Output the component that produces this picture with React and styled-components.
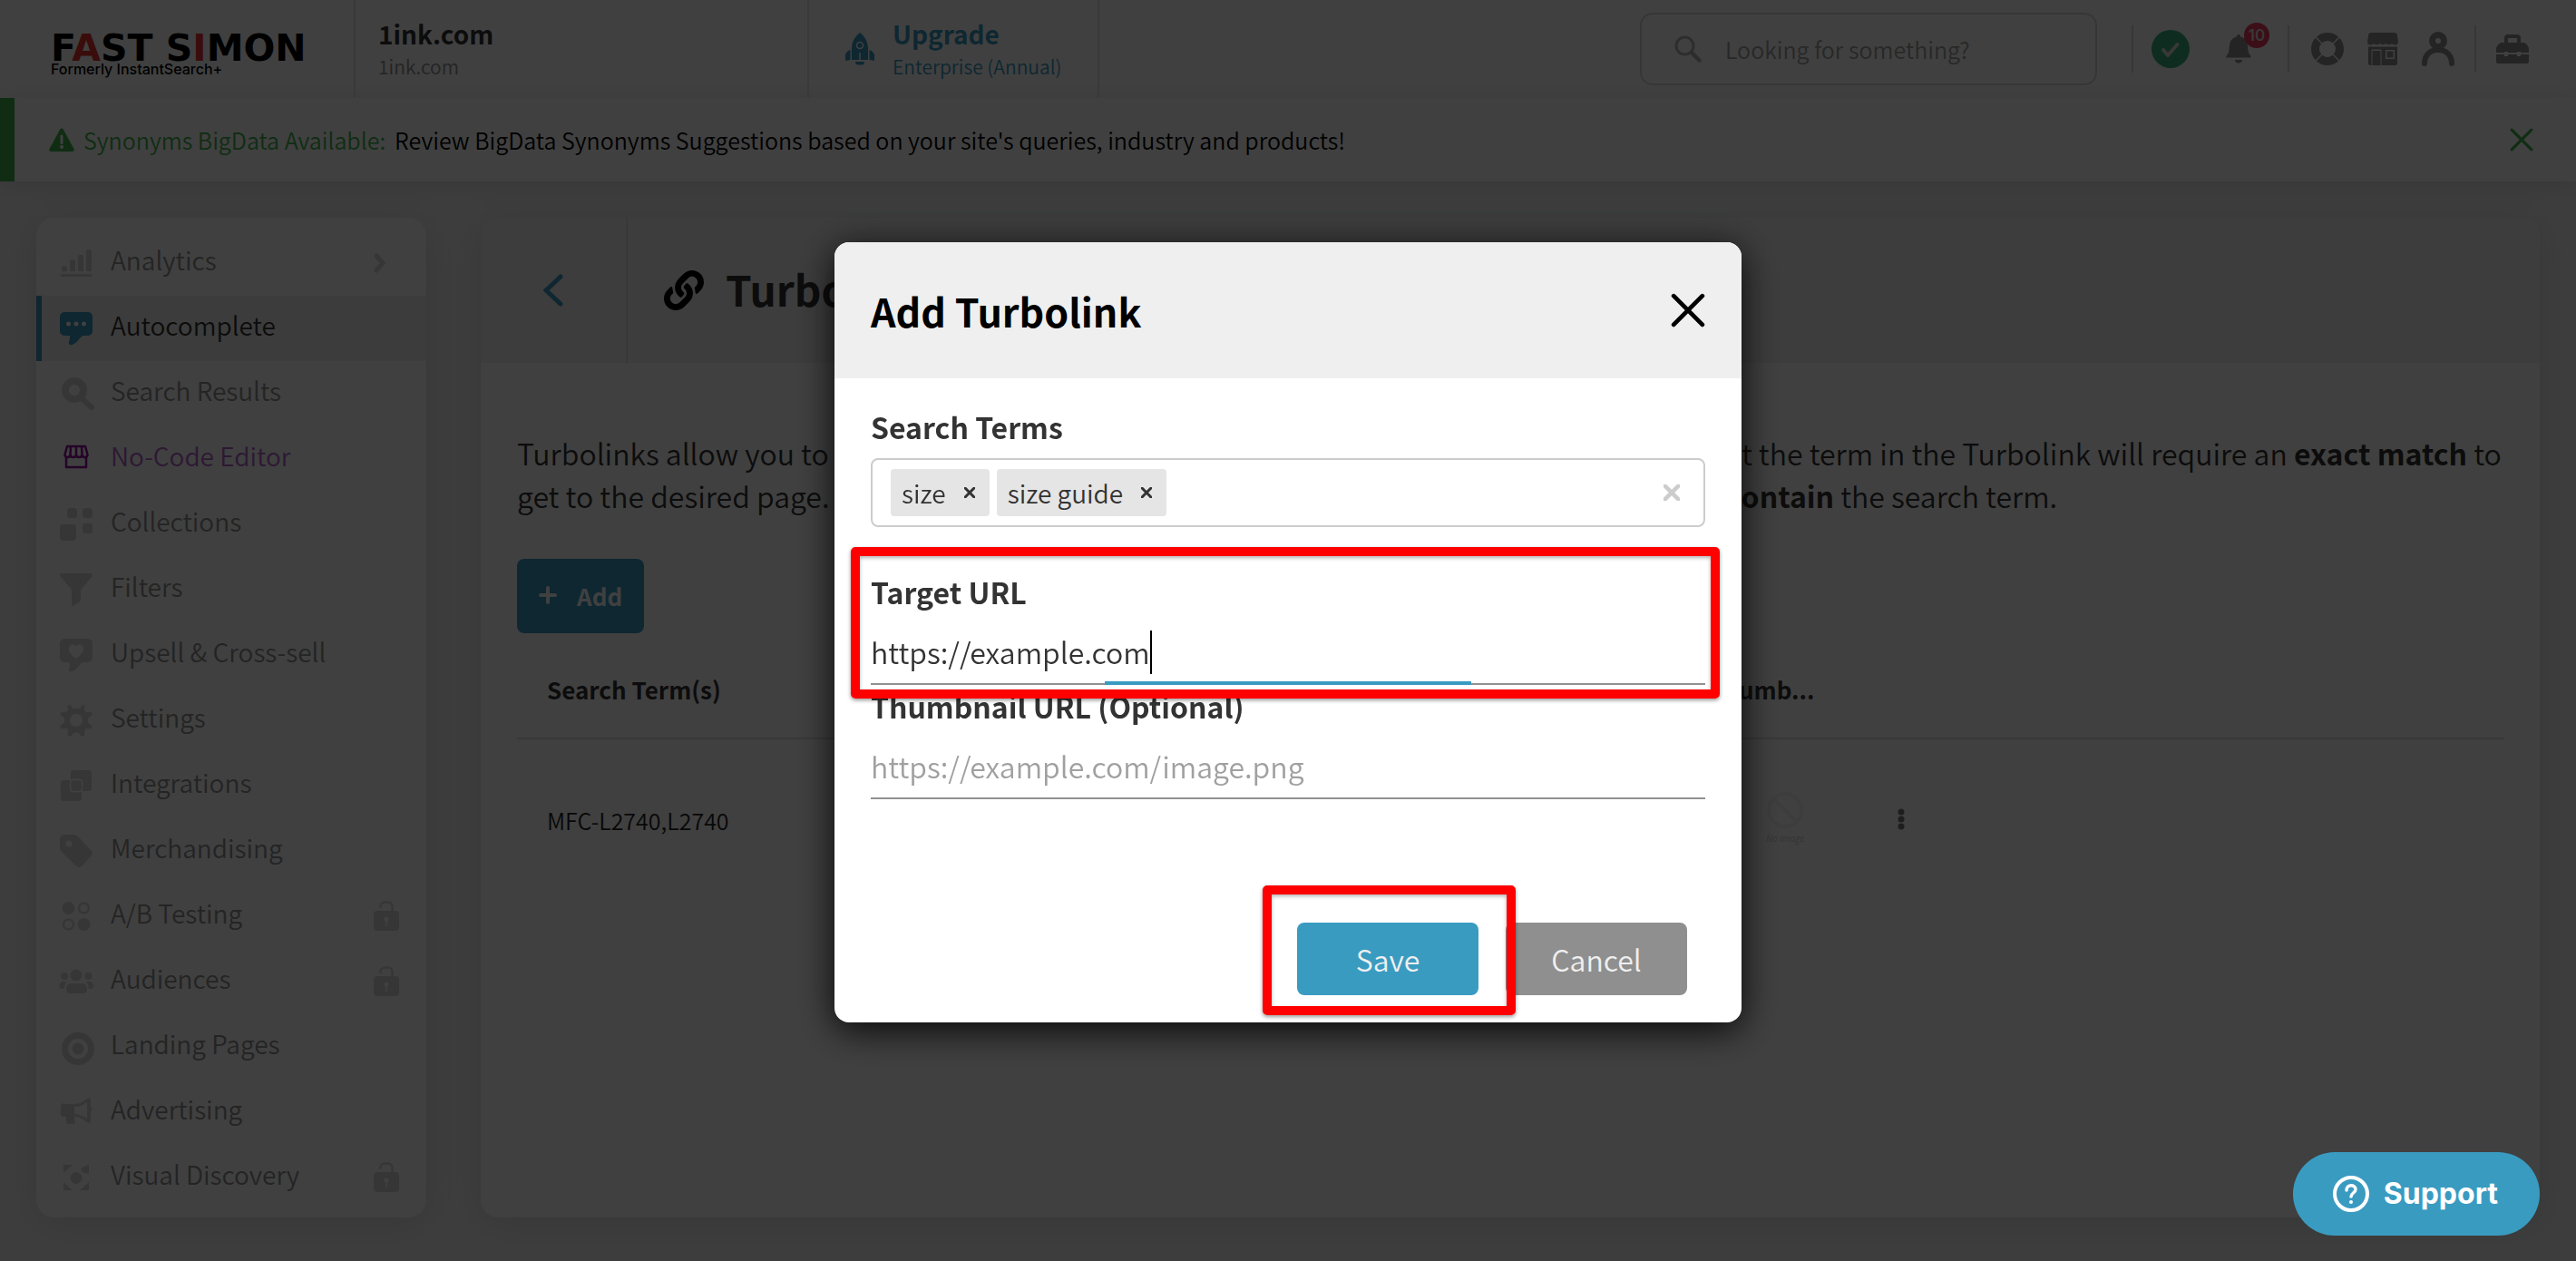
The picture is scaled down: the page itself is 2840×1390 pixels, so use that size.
import { useState } from "react";
import styled, { createGlobalStyle } from "styled-components";
import { FaLink } from "react-icons/fa";

const blue = "#3a9bc1";
const green = "#41b34d";
const muted = "#8f8f8f";
const faint = "#d8d8d8";

const GlobalStyle = createGlobalStyle`
  *, *::before, *::after {
    box-sizing: border-box;
  }

  body {
    margin: 0;
    background: #f4f4f4;
    color: #333;
    font-family: "Noto Sans CJK SC", "Noto Sans", sans-serif;
    font-size: 25px;
    font-weight: 350;
  }

  button, input {
    font-family: inherit;
    font-size: inherit;
    font-weight: inherit;
    color: inherit;
  }

  b, strong {
    font-weight: 700;
  }

  button {
    padding: 0;
    border: 0;
    background: none;
    cursor: pointer;
  }

  a {
    color: inherit;
    text-decoration: none;
  }

  svg {
    display: block;
    flex: none;
  }
`;

/* ---------- icons ---------- */

const CloseIcon = ({ size, stroke = 3 }) => (
  <svg width={size} height={size} viewBox="0 0 24 24" fill="none" stroke="currentColor" strokeWidth={stroke} strokeLinecap="round">
    <path d="M2 2l20 20M22 2L2 22" />
  </svg>
);

const WarningIcon = () => (
  <svg width="28" height="26" viewBox="0 0 28 26">
    <path d="M12.4 1.2a2 2 0 0 1 3.2 0l12 22a2 2 0 0 1-1.7 2.8H2.1a2 2 0 0 1-1.7-2.8z" fill={green} />
    <path d="M14 9v7.5" stroke="#fff" strokeWidth="3" strokeLinecap="round" />
    <circle cx="14" cy="21" r="2" fill="#fff" />
  </svg>
);

const RocketIcon = () => (
  <svg width="32" height="36" viewBox="0 0 32 36" fill="currentColor">
    <path d="M16 0c6 4.5 9 10.500 9 18v12H7V18C7 10.500 10 4.500 16 0z" />
    <path d="M5.5 19v11L0 31v-7c1-2.500 3-4 5.500-5zM26.500 19v11l5.500 1v-7c-1-2.500-3-4-5.500-5zM11 32h10c0 2-1 3.500-3 3.500h-4c-2 0-3-1.500-3-3.500z" />
    <circle cx="16" cy="14" r="3.5" fill="none" stroke="#fff" strokeWidth="1.5" />
    <path d="M16 22v8" stroke="#fff" strokeWidth="1.5" />
  </svg>
);

const SearchIcon = () => (
  <svg width="30" height="30" viewBox="0 0 30 30" fill="none" stroke="currentColor" strokeLinecap="round">
    <circle cx="11.5" cy="11.5" r="9.5" strokeWidth="3" />
    <path d="M19 19l8.5 8.5" strokeWidth="4.5" />
  </svg>
);

const CheckIcon = () => (
  <svg width="42" height="42" viewBox="0 0 42 42">
    <circle cx="21" cy="21" r="21" fill="#3cb080" />
    <path d="M13 22l5 6L28.5 16" fill="none" stroke="#ddd" strokeWidth="4" strokeLinecap="round" strokeLinejoin="round" />
  </svg>
);

const BellIcon = () => (
  <svg width="28" height="32" viewBox="0 0 28 32" fill="currentColor">
    <path d="M14 0c1.5 0 2 1 2 2.5 5 1 7.5 4.5 8 9.5.5 6 1 9 3.5 12 .5.8.2 1.5-.8 1.5H1.3c-1 0-1.3-.7-.8-1.5C3 21 3.500 18 4 12c.5-5 3-8.500 8-9.500C12 1 12.500 0 14 0zM10 28h8c0 2-1.500 3.500-4 3.500S10 30 10 28z" />
  </svg>
);

const LifebuoyIcon = () => (
  <svg width="36" height="36" viewBox="0 0 36 36" fill="none">
    <circle cx="18" cy="18" r="13.5" stroke="currentColor" strokeWidth="9" />
    <path d="M5 5l8 8M31 5l-8 8M5 31l8-8M31 31l-8-8" stroke="#fff" strokeWidth="1.5" />
  </svg>
);

const StoreIcon = () => (
  <svg width="34" height="36" viewBox="0 0 34 36" fill="currentColor">
    <path d="M4 0h26c2 0 2.5 1 2.7 2L34 10c0 2.5-1.5 3.5-3.5 3.5-1.5 0-2.5-.5-3.5-1.5-1.5 1.8-5 1.8-6.7 0-1.5 1.8-5 1.8-6.6 0-1.700 1.8-5.200 1.8-6.700 0-1 1-2 1.500-3.500 1.500C1.500 13.500 0 12.500 0 10L1.300 2C1.500 1 2 0 4 0z" />
    <path fillRule="evenodd" d="M1 15.5h32V34a2 2 0 0 1-2 2H3a2 2 0 0 1-2-2zM20 19v10h10V19zM4.5 19.5V36h1V20h9v16h1V19.5a1 1 0 0 0-1-1h-9a1 1 0 0 0-1 1z" />
    <path d="M21.5 20.5h7v7h-7z" />
  </svg>
);

const PersonIcon = () => (
  <svg width="36" height="38" viewBox="0 0 36 38" fill="none" stroke="currentColor" strokeLinecap="round">
    <circle cx="18" cy="10" r="6.5" strokeWidth="7" />
    <path d="M3 35c0-9 6-15 15-15s15 6 15 15" strokeWidth="6" />
  </svg>
);

const BriefcaseIcon = () => (
  <svg width="36" height="32" viewBox="0 0 36 32">
    <path d="M11 10V4c0-1.5 1-2 2-2h10c1 0 2 .5 2 2v6" fill="none" stroke="currentColor" strokeWidth="4" />
    <path d="M5 9h26c3 2 5 4 5 7v4H0v-4c0-3 2-5 5-7zM0 22h36v8a2 2 0 0 1-2 2H2a2 2 0 0 1-2-2z" fill="currentColor" />
    <path d="M9 19h4v5H9zM23 19h4v5h-4z" fill="#fff" />
  </svg>
);

const LockIcon = () => (
  <svg width="28" height="34" viewBox="0 0 28 34">
    <path d="M7.5 8V6A4.500 4.500 0 0 1 12 1.500h4A4.500 4.500 0 0 1 20.500 6v6" fill="none" stroke="currentColor" strokeWidth="2.5" />
    <rect y="11" width="28" height="22" rx="4" fill="currentColor" />
    <circle cx="14" cy="20" r="2.5" fill="#fff" />
    <path d="M14 20v8" stroke="#fff" strokeWidth="1.5" />
  </svg>
);

const menuShapes = {
  analytics: (
    <path d="M2 27v-4a2 2 0 0 1 2-2h2a2 2 0 0 1 2 2v4zM11 27V16a2 2 0 0 1 2-2h2a2 2 0 0 1 2 2v11zM20 27V11a2 2 0 0 1 2-2h2a2 2 0 0 1 2 2v16zM29 27V5a2 2 0 0 1 2-2h2a2 2 0 0 1 2 2v22zM2 30h32a1.5 1.5 0 0 1 0 3H2a1.5 1.5 0 0 1 0-3z" />
  ),
  autocomplete: (
    <>
      <path d="M5 0h26a5 5 0 0 1 5 5v16a5 5 0 0 1-5 5h-6c-4 3-6 8-11 10-3 .8-5-1-4-3.5 1-2 1-4 1-6.5H5a5 5 0 0 1-5-5V5a5 5 0 0 1 5-5z" />
      <path d="M9.5 13h.01M18 13h.01M26.5 13h.01" stroke="#fff" strokeWidth="5" strokeLinecap="round" />
    </>
  ),
  search: (
    <g fill="none" stroke="currentColor" strokeLinecap="round">
      <circle cx="16" cy="14" r="10" strokeWidth="8" />
      <path d="M25 24l10 9" strokeWidth="6" />
    </g>
  ),
  editor: (
    <path
      d="M7 15v12h22V15M8 4h20l2.5 9c0 2-1.5 3-3 3s-3-1-3-3c0 2-1.5 3-3.2 3S18 15 18 13c0 2-1.5 3-3.3 3s-3.2-1-3.2-3c0 2-1.5 3-3 3s-3-1-3-3zM12 4l-.5 9M18 4v9M24 4l.5 9"
      fill="none"
      stroke="currentColor"
      strokeWidth="2.5"
      strokeLinejoin="round"
    />
  ),
  collections: (
    <>
      <rect x="8" y="0" width="11" height="11" rx="3" />
      <rect x="25" y="0" width="11" height="11" rx="3" />
      <rect x="25" y="17" width="11" height="11" rx="3" />
      <rect x="0" y="18" width="18" height="18" rx="4" />
    </>
  ),
  filters: <path d="M2 0h32c2 0 2.5 2 1.5 3.5L23 18v12l-7 5.5c-1.5 1-3 .5-3-1.5V18L.5 3.5C-.5 2 0 0 2 0z" />,
  upsell: (
    <>
      <path d="M5 0h26a5 5 0 0 1 5 5v16a5 5 0 0 1-5 5h-6c-4 3-6 8-11 10-3 .8-5-1-4-3.5 1-2 1-4 1-6.5H5a5 5 0 0 1-5-5V5a5 5 0 0 1 5-5z" />
      <path d="M18 22c-5-4-8-6.5-8-10.5C10 6 16 5 18 8.500 20 5 26 6 26 11.500c0 4-3 6.500-8 10.500z" fill="#fff" />
    </>
  ),
  settings: (
    <>
      <path d="M14.5 5L11 .5a15 15 0 0 0-2.5 1.3L9 7l-2 2-5.5-.5L.3 12 5 15.500v5L.3 24l1.200 3.500L7 27l2 2-.5 5.500L12 36l4-4.500h4l4 4.500 3.500-1.500L27 29l2-2 5.500.5L35.700 24 31 20.500v-5L35.700 12l-1.200-3.500L29 9l-2-2 .5-5.200L25 .5 21.500 5z" />
      <circle cx="18" cy="18" r="7" fill="#fff" />
    </>
  ),
  integrations: (
    <>
      <rect x="12" y="1" width="23" height="23" rx="3" />
      <rect x="1" y="12" width="23" height="23" rx="3" />
      <rect x="11.5" y="11.5" width="13" height="13" rx="3" fill="none" stroke="#fff" strokeWidth="1.5" />
    </>
  ),
  merchandising: (
    <>
      <path d="M5 0h10c2 0 3.5.5 5 2l14.5 15.500c2 2 2 4 0 6L24.500 34.500c-2 2-4.500 2-6.500 0L2 19c-1.500-1.500-2-3-2-5V5a5 5 0 0 1 5-5z" />
      <circle cx="10" cy="10" r="3.5" fill="#fff" />
    </>
  ),
  testing: (
    <>
      <circle cx="9.5" cy="9" r="7" />
      <circle cx="26.5" cy="27" r="7" />
      <circle cx="26.5" cy="9" r="5.5" fill="none" stroke="currentColor" strokeWidth="2.5" />
      <circle cx="9.5" cy="27" r="5.5" fill="none" stroke="currentColor" strokeWidth="2.5" />
    </>
  ),
  audiences: (
    <>
      <circle cx="18" cy="11" r="6.5" />
      <circle cx="5" cy="12" r="4" />
      <circle cx="31.5" cy="12" r="4" />
      <path d="M12 20h13c3 0 5 3 5 7 0 3-1.5 4-4 4H11c-2.5 0-4-1-4-4 0-4 2-7 5-7zM3 18h5c-2 2-3 4-3.2 8H2c-1.5 0-2.5-1-2.5-3S1 18 3 18zM28.5 18h5c2 0 3.5 3 3.5 5s-1 3-2.5 3h-2.800c-.2-4-1.200-6-3.200-8z" />
    </>
  ),
  landing: (
    <>
      <circle cx="20" cy="20" r="14.5" fill="none" stroke="currentColor" strokeWidth="7" />
      <circle cx="20" cy="20" r="6.5" />
    </>
  ),
  advertising: (
    <path
      fillRule="evenodd"
      d="M4 9h12c6 0 10-3 14-6 2-1.5 4-.5 4 1v8c2 .5 2 5 0 6v10c0 2-2 2.5-4 1-4-3-8-6-14-6 0 3 1 5 1 6.5 0 1-.5 1.5-2 1.5h-5c-2 0-3-1-3-3v-5H4c-2 0-3-1-3-3v-8c0-2 1-4 3-4zM16 12v8c5 0 10 2 14 5V7c-4 3-9 5-14 5z"
    />
  ),
  discovery: (
    <path d="M4 4h10L4 13zM32 32H22l10-9zM4 32h10L4 23zM24 11a3 3 0 0 1 2-5l6-2v9c-2 1-5 1-8-2zM18 12a6.5 6.5 0 1 1 0 13 6.5 6.5 0 0 1 0-13z" />
  ),
};

const MenuIcon = ({ name }) => (
  <svg width="36" height="36" viewBox="0 0 36 36" fill="currentColor" overflow="visible">
    {menuShapes[name]}
  </svg>
);

/* ---------- header ---------- */

const Header = styled.header`
  display: flex;
  align-items: stretch;
  height: 108px;
  background: #fff;
`;

const Logo = styled.a`
  display: flex;
  flex-direction: column;
  width: 392px;
  padding: 30px 0 0 56px;
  border-right: 2px solid #e4e4e4;
  color: #000;
`;

const LogoName = styled.span`
  font: bold 41px/46px "DejaVu Sans", sans-serif;
  white-space: nowrap;

  em {
    font-style: normal;
    color: #e8322c;
  }
`;

const LogoNote = styled.span`
  margin-top: -10px;
  font: 500 16px/20px Inter, sans-serif;
`;

const Account = styled.div`
  display: flex;
  align-items: center;
  gap: 20px;
  width: ${({ $width }) => $width}px;
  padding-left: ${({ $indent }) => $indent}px;
  border-right: 2px solid #e4e4e4;
  color: ${({ $color }) => $color};
`;

const AccountText = styled.div`
  display: flex;
  flex-direction: column;
  gap: 2px;

  strong {
    font-size: 28px;
    line-height: 36px;
  }

  span {
    font-size: 21px;
    line-height: 32px;
    color: ${({ $sub }) => $sub};
  }
`;

const Tools = styled.div`
  display: flex;
  align-items: center;
  margin-left: auto;
  padding-right: 52px;
  color: ${muted};
`;

const SearchBox = styled.label`
  display: flex;
  align-items: center;
  gap: 26px;
  width: 504px;
  height: 80px;
  margin-right: 38px;
  padding: 0 36px;
  border: 2px solid ${faint};
  border-radius: 14px;
  color: #b4b4b4;

  input {
    flex: 1;
    min-width: 0;
    padding: 0;
    border: 0;
    outline: 0;
    background: none;
  }

  input::placeholder {
    color: #a0a0a0;
    opacity: 1;
  }
`;

const ToolGroup = styled.div`
  display: flex;
  align-items: center;
  gap: ${({ $gap }) => $gap}px;
  height: 52px;
  padding: 0 ${({ $end }) => $end}px 0 ${({ $start }) => $start}px;
  border-left: 2px solid ${faint};
`;

const ToolButton = styled.button`
  position: relative;
`;

const Badge = styled.span`
  position: absolute;
  top: -13px;
  left: 20px;
  width: 28px;
  border-radius: 14px;
  background: #f03a5c;
  color: #ddd;
  font: 600 17px/28px Inter, sans-serif;
  text-align: center;
`;

/* ---------- banner ---------- */

const Banner = styled.div`
  display: flex;
  align-items: center;
  gap: 10px;
  height: 92px;
  padding: 0 47px 0 38px;
  border-left: 16px solid ${green};
  background: #fff;
  box-shadow: 0 4px 24px rgba(40, 60, 60, 0.14);
  color: #000;
`;

const BannerTopic = styled.span`
  color: ${green};
`;

const BannerClose = styled.button`
  margin-left: auto;
  color: ${green};
`;

/* ---------- page ---------- */

const Content = styled.div`
  display: flex;
  align-items: stretch;
  gap: 60px;
  padding: 40px 40px 48px;
`;

const Sidebar = styled.nav`
  flex: none;
  width: 430px;
  padding: 14px 0 8px;
  border-radius: 20px;
  background: #fff;
  box-shadow: 0 6px 40px rgba(40, 60, 70, 0.14);
`;

const MenuItem = styled.a`
  display: flex;
  align-items: center;
  gap: 20px;
  height: 72px;
  padding: 0 30px 0 20px;
  border-left: 6px solid ${({ $active }) => ($active ? blue : "transparent")};
  background: ${({ $active }) => ($active ? "#efefef" : "none")};
  color: ${({ $tone }) => $tone || muted};
  font-size: 28px;
  line-height: 36px;

  span {
    flex: 1;
    padding-bottom: 8px;
  }

  svg {
    color: ${({ $iconTone }) => $iconTone || faint};
  }
`;

const Chevron = styled.svg`
  margin-right: 14px;
`;

const Card = styled.main`
  flex: 1;
  min-width: 0;
  border-radius: 20px;
  background: #fff;
  box-shadow: 0 6px 40px rgba(40, 60, 70, 0.14);
`;

const CardHeader = styled.div`
  display: flex;
  align-items: center;
  height: 160px;
  border-radius: 20px 20px 0 0;
  background: #f2f2f2;
  color: #000;

  h1 {
    margin: 0 0 4px 24px;
    font-size: 46px;
    line-height: 60px;
    color: #333;
  }
`;

const BackButton = styled.button`
  display: flex;
  align-items: center;
  justify-content: center;
  width: 162px;
  height: 100%;
  margin-right: 40px;
  border-right: 2px solid #e0e0e0;
  color: ${blue};
`;

const CardBody = styled.div`
  padding: 76px 40px 40px;
`;

const Intro = styled.p`
  margin: 0 0 46px;
  font-size: 32px;
  line-height: 47px;
`;

const AddButton = styled.button`
  display: flex;
  align-items: center;
  gap: 22px;
  height: 82px;
  padding: 0 24px 2px;
  border-radius: 8px;
  background: ${blue};
  color: #fff;
  font-size: 26px;
  font-weight: 700;
`;

const Table = styled.table`
  width: 100%;
  margin-top: 16px;
  border-collapse: collapse;
  table-layout: fixed;
  text-align: left;

  th {
    height: 100px;
    padding: 0 0 8px 33px;
    border-bottom: 2px solid #e0e0e0;
    font-size: 26px;
    line-height: 36px;
  }

  td {
    height: 180px;
    padding: 0 0 2px 33px;
    color: #222;
  }
`;

const NoImage = styled.div`
  display: flex;
  flex-direction: column;
  align-items: center;
  width: 168px;
  color: #f2f2f2;

  small {
    font: italic 10px/22px "Open Sans", sans-serif;
    color: #d0d0d0;
  }
`;

const Dots = styled.button`
  color: #777;
`;

/* ---------- modal ---------- */

const Overlay = styled.div`
  position: fixed;
  inset: 0;
  display: flex;
  align-items: center;
  justify-content: center;
  padding-top: 4px;
  background: rgba(0, 0, 0, 0.75);
`;

const Modal = styled.div`
  width: 1000px;
  border-radius: 16px;
  background: #fff;
  box-shadow: 0 8px 40px rgba(0, 0, 0, 0.9);
`;

const ModalHeader = styled.div`
  display: flex;
  align-items: center;
  justify-content: space-between;
  height: 150px;
  padding: 0 40px;
  border-radius: 16px 16px 0 0;
  background: #efefef;
  color: #000;

  h2 {
    margin: 0;
    font-size: 43px;
    line-height: 60px;
  }
`;

const ModalBody = styled.div`
  padding: 30px 40px 0;
`;

const Field = styled.div`
  position: relative;
  margin-bottom: ${({ $space }) => $space || 0}px;
`;

const FieldLabel = styled.label`
  display: block;
  font-size: 32px;
  font-weight: 700;
  line-height: 46px;
`;

const TagSelect = styled.div`
  display: flex;
  align-items: center;
  gap: 8px;
  height: 76px;
  margin-top: 12px;
  padding: 0 26px 0 20px;
  border: 2px solid #ccc;
  border-radius: 8px;

  input {
    flex: 1;
    min-width: 0;
    border: 0;
    outline: 0;
  }
`;

const Tag = styled.span`
  display: flex;
  align-items: center;
  gap: 20px;
  height: 52px;
  padding: 0 16px 0 12px;
  border-radius: 4px;
  background: #e5e5e5;
  font-size: 28px;
  line-height: 52px;
`;

const ClearButton = styled.button`
  color: #ccc;
`;

const TextInput = styled.input`
  display: block;
  width: 100%;
  height: 80px;
  padding: 8px 0 0;
  border: 0;
  border-bottom: 2px solid #919191;
  outline: 0;
  font-size: 32px;

  &::placeholder {
    color: #a0a0a0;
    opacity: 1;
  }
`;

const Caret = styled.span`
  position: absolute;
  bottom: 12px;
  left: 308px;
  width: 2px;
  height: 48px;
  background: #000;
`;

const FocusLine = styled.span`
  position: absolute;
  bottom: 0;
  left: 28%;
  width: 44%;
  height: 4px;
  background: ${blue};
`;

const Highlight = styled.span`
  position: absolute;
  z-index: 1;
  inset: ${({ $inset }) => $inset};
  border: 10px solid #f00;
  border-radius: 5px;
  box-shadow: 0 2px 4px rgba(0, 0, 0, 0.4), inset 0 2px 4px rgba(0, 0, 0, 0.3);
  pointer-events: none;
`;

const ModalActions = styled.div`
  display: flex;
  justify-content: flex-end;
  gap: 30px;
  padding: 136px 60px 30px;
`;

const Action = styled.div`
  position: relative;
`;

const ActionButton = styled.button`
  width: 200px;
  height: 80px;
  border-radius: 8px;
  background: ${({ $primary }) => ($primary ? blue : "#8f8f8f")};
  color: #efefef;
  font-size: 32px;
`;

const SupportButton = styled.button`
  position: fixed;
  right: 40px;
  bottom: 28px;
  display: flex;
  align-items: center;
  gap: 16px;
  height: 92px;
  padding: 0 46px 0 44px;
  border-radius: 46px;
  background: ${blue};
  color: #fff;
  font: 700 32px/40px Inter, sans-serif;
`;

const menu = [
  { label: "Analytics", icon: "analytics", more: true },
  { label: "Autocomplete", icon: "autocomplete", active: true, tone: "#333", iconTone: blue },
  { label: "Search Results", icon: "search" },
  { label: "No-Code Editor", icon: "editor", tone: "#b565c9", iconTone: "#920fa0" },
  { label: "Collections", icon: "collections" },
  { label: "Filters", icon: "filters" },
  { label: "Upsell & Cross-sell", icon: "upsell" },
  { label: "Settings", icon: "settings" },
  { label: "Integrations", icon: "integrations" },
  { label: "Merchandising", icon: "merchandising" },
  { label: "A/B Testing", icon: "testing", locked: true },
  { label: "Audiences", icon: "audiences", locked: true },
  { label: "Landing Pages", icon: "landing" },
  { label: "Advertising", icon: "advertising" },
  { label: "Visual Discovery", icon: "discovery", locked: true },
];

const TopBar = () => (
  <Header>
    <Logo href="#home">
      <LogoName>F<em>A</em>ST S<em>I</em>MON</LogoName>
      <LogoNote>Formerly InstantSearch+</LogoNote>
    </Logo>
    <Account $width={500} $indent={25} $color="#333">
      <AccountText $sub={muted}>
        <strong>1ink.com</strong>
        <span>1ink.com</span>
      </AccountText>
    </Account>
    <Account $width={320} $indent={40} $color={blue}>
      <RocketIcon />
      <AccountText>
        <strong>Upgrade</strong>
        <span>Enterprise (Annual)</span>
      </AccountText>
    </Account>
    <Tools>
      <SearchBox>
        <SearchIcon />
        <input type="search" placeholder="Looking for something?" aria-label="Search" />
      </SearchBox>
      <ToolGroup $gap={40} $start={20} $end={40}>
        <ToolButton aria-label="Status"><CheckIcon /></ToolButton>
        <ToolButton aria-label="Notifications">
          <BellIcon />
          <Badge>10</Badge>
        </ToolButton>
      </ToolGroup>
      <ToolGroup $gap={26} $start={24} $end={22}>
        <ToolButton aria-label="Help"><LifebuoyIcon /></ToolButton>
        <ToolButton aria-label="Store"><StoreIcon /></ToolButton>
        <ToolButton aria-label="Profile"><PersonIcon /></ToolButton>
      </ToolGroup>
      <ToolGroup $gap={0} $start={22} $end={0}>
        <ToolButton aria-label="Toolbox"><BriefcaseIcon /></ToolButton>
      </ToolGroup>
    </Tools>
  </Header>
);

const SideMenu = () => (
  <Sidebar>
    {menu.map((item) => (
      <MenuItem key={item.icon} href={`#${item.icon}`} $active={item.active} $tone={item.tone} $iconTone={item.iconTone}>
        <MenuIcon name={item.icon} />
        <span>{item.label}</span>
        {item.more && (
          <Chevron width="14" height="22" viewBox="0 0 14 22" fill="none" stroke="currentColor" strokeWidth="5" strokeLinecap="round">
            <path d="M3 3l7 8-7 8" />
          </Chevron>
        )}
        {item.locked && <LockIcon />}
      </MenuItem>
    ))}
  </Sidebar>
);

const Turbolinks = () => (
  <Card>
    <CardHeader>
      <BackButton aria-label="Back">
        <svg width="22" height="36" viewBox="0 0 22 36" fill="none" stroke="currentColor" strokeWidth="5" strokeLinecap="round">
          <path d="M19 3L3 18l16 15" />
        </svg>
      </BackButton>
      <FaLink size={44} />
      <h1>Turbolinks</h1>
    </CardHeader>
    <CardBody>
      <Intro>
        Turbolinks allow you to lead shoppers to any page they look for on your site. Please note that the
        term in the Turbolink will require an <b>exact match</b> to get to the desired page. It does not redirect on
        other search terms that partly match or that <b>contain</b> the search term.
      </Intro>
      <AddButton>
        <svg width="20" height="20" viewBox="0 0 20 20" fill="none" stroke="currentColor" strokeWidth="4" strokeLinecap="round">
          <path d="M10 2v16M2 10h16" />
        </svg>
        Add
      </AddButton>
      <Table>
        <colgroup>
          <col width="20%" />
          <col />
          <col width="9.5%" />
          <col width="32%" />
        </colgroup>
        <thead>
          <tr>
            <th>Search Term(s)</th>
            <th aria-label="Target" />
            <th>Thumb...</th>
            <th aria-label="Actions" />
          </tr>
        </thead>
        <tbody>
          <tr>
            <td>MFC-L2740,L2740</td>
            <td />
            <td>
              <NoImage>
                <svg width="40" height="40" viewBox="0 0 40 40" fill="none" stroke="currentColor" strokeWidth="4">
                  <circle cx="20" cy="20" r="18" />
                  <path d="M7 7l26 26" />
                </svg>
                <small>No image</small>
              </NoImage>
            </td>
            <td>
              <Dots aria-label="Row menu">
                <svg width="8" height="24" viewBox="0 0 8 24" fill="currentColor">
                  <circle cx="4" cy="4" r="3.5" />
                  <circle cx="4" cy="12" r="3.5" />
                  <circle cx="4" cy="20" r="3.5" />
                </svg>
              </Dots>
            </td>
          </tr>
        </tbody>
      </Table>
    </CardBody>
  </Card>
);

const AddTurbolink = () => {
  const [terms, setTerms] = useState(["size", "size guide"]);
  const [target, setTarget] = useState("https://example.com");
  const [thumbnail, setThumbnail] = useState("");

  return (
    <Overlay>
      <Modal role="dialog" aria-labelledby="modal-title">
        <ModalHeader>
          <h2 id="modal-title">Add Turbolink</h2>
          <button aria-label="Close"><CloseIcon size={38} /></button>
        </ModalHeader>
        <ModalBody>
          <Field $space={48}>
            <FieldLabel htmlFor="terms">Search Terms</FieldLabel>
            <TagSelect>
              {terms.map((term) => (
                <Tag key={term}>
                  {term}
                  <button aria-label={`Remove ${term}`} onClick={() => setTerms(terms.filter((t) => t !== term))}>
                    <CloseIcon size={12} stroke={6} />
                  </button>
                </Tag>
              ))}
              <input id="terms" />
              <ClearButton aria-label="Clear all" onClick={() => setTerms([])}>
                <CloseIcon size={18} stroke={6} />
              </ClearButton>
            </TagSelect>
          </Field>
          <Field>
            <FieldLabel htmlFor="target">Target URL</FieldLabel>
            <TextInput id="target" value={target} onChange={(e) => setTarget(e.target.value)} />
            <Caret />
            <FocusLine />
            <Highlight $inset="-26px -16px -15px -22px" />
          </Field>
          <Field>
            <FieldLabel htmlFor="thumbnail">Thumbnail URL (Optional)</FieldLabel>
            <TextInput
              id="thumbnail"
              placeholder="https://example.com/image.png"
              value={thumbnail}
              onChange={(e) => setThumbnail(e.target.value)}
            />
          </Field>
        </ModalBody>
        <ModalActions>
          <Action>
            <ActionButton $primary>Save</ActionButton>
            <Highlight $inset="-41px -41px -22px -38px" />
          </Action>
          <ActionButton>Cancel</ActionButton>
        </ModalActions>
      </Modal>
    </Overlay>
  );
};

const App = () => (
  <>
    <GlobalStyle />
    <TopBar />
    <Banner>
      <WarningIcon />
      <BannerTopic>Synonyms BigData Available:</BannerTopic>
      <span>Review BigData Synonyms Suggestions based on your site's queries, industry and products!</span>
      <BannerClose aria-label="Dismiss"><CloseIcon size={26} /></BannerClose>
    </Banner>
    <Content>
      <SideMenu />
      <Turbolinks />
    </Content>
    <AddTurbolink />
    <SupportButton>
      <svg width="40" height="40" viewBox="0 0 40 40" fill="none" stroke="currentColor" strokeWidth="4" strokeLinecap="round">
        <circle cx="20" cy="20" r="18" />
        <path d="M15 16c0-7 10-6.500 10-1 0 4-5 4-5 8" strokeWidth="3.5" />
        <path d="M20 29v.1" />
      </svg>
      Support
    </SupportButton>
  </>
);

export default App;
